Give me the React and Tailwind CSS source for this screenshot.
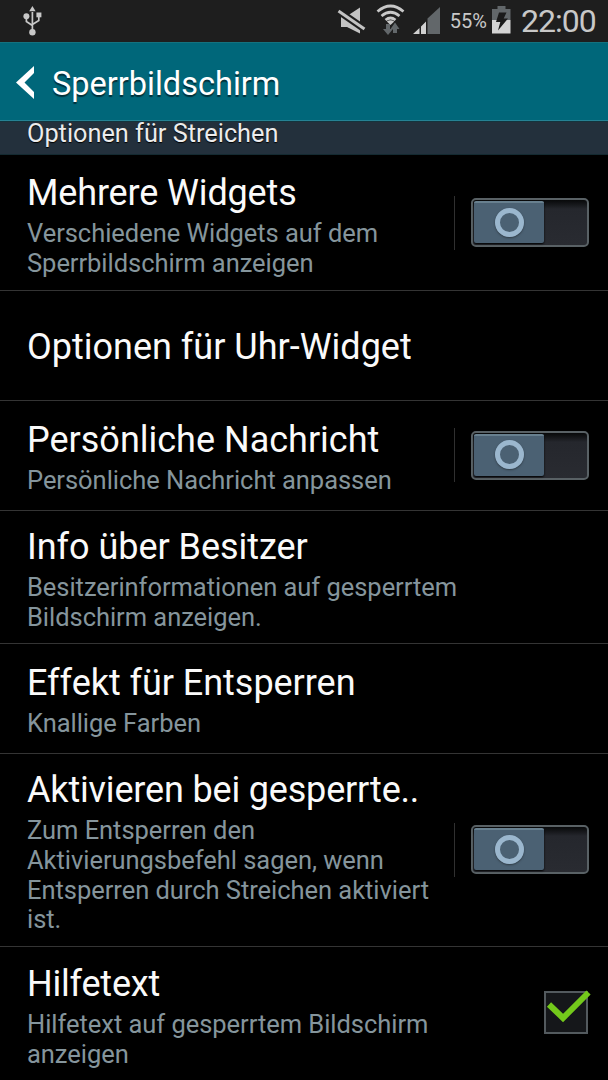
const rows = [
  {
    title: "Mehrere Widgets",
    lines: ["Verschiedene Widgets auf dem", "Sperrbildschirm anzeigen"],
    control: "switch",
    box: "h-[136px] pt-[17px]",
    tracking: "tracking-[-0.15px]",
    offset: "-mt-[17px]",
  },
  {
    title: "Optionen für Uhr-Widget",
    lines: [],
    box: "h-[110px] pt-[35px]",
    tracking: "tracking-normal",
  },
  {
    title: "Persönliche Nachricht",
    lines: ["Persönliche Nachricht anpassen"],
    control: "switch",
    box: "h-[110px] pt-[18px]",
    tracking: "tracking-normal",
    offset: "-mt-[19px]",
  },
  {
    title: "Info über Besitzer",
    lines: ["Besitzerinformationen auf gesperrtem", "Bildschirm anzeigen."],
    box: "h-[133px] pt-[15px]",
    tracking: "tracking-[-0.04px]",
  },
  {
    title: "Effekt für Entsperren",
    lines: ["Knallige Farben"],
    box: "h-[110px] pt-[18px]",
    tracking: "tracking-[-0.04px]",
  },
  {
    title: "Aktivieren bei gesperrte..",
    lines: [
      "Zum Entsperren den",
      "Aktivierungsbefehl sagen, wenn",
      "Entsperren durch Streichen aktiviert",
      "ist.",
    ],
    control: "switch",
    box: "h-[193px] pt-[15px]",
    tracking: "tracking-[-0.17px]",
    offset: "-mt-[16px]",
  },
  {
    title: "Hilfetext",
    lines: ["Hilfetext auf gesperrtem Bildschirm", "anzeigen"],
    control: "checkbox",
    box: "h-[133px] pt-[16px]",
    tracking: "tracking-[-0.2px]",
  },
];

const UsbIcon = () => (
  <svg width="20" height="32" viewBox="0 0 20 32" className="ml-[22px]">
    <g fill="none" stroke="#c8c8c8" strokeWidth="1.7">
      <path d="M10.4 7v20M4.400 12v4.500l6 4M16.800 11v4.500l-6.400 4" />
    </g>
    <g fill="#c8c8c8">
      <path d="M10.400 1l3.200 5.300H7.200z" />
      <circle cx="4.4" cy="11.300" r="3" />
      <path d="M14.400 7.500h5v4.800h-5z" />
      <circle cx="10.4" cy="27.200" r="3.200" />
    </g>
  </svg>
);

const StatusIcons = () => (
  <svg width="106" height="42" viewBox="336 0 106 42">
    <path d="M341 16h6l13-8.500v26l-13-6.500h-6z" fill="#c3c3c3" />
    <path d="M338.500 11l26 18" stroke="#1e1e1e" strokeWidth="7" />
    <path d="M338.500 11l26 18" stroke="#c3c3c3" strokeWidth="3" />
    <g fill="none" stroke="#c8c8c8" strokeWidth="2.700">
      <path d="M377.500 11.500q13-11 26 0M381.500 16q9-7.500 18 0M385.500 20q5-4 10 0" />
    </g>
    <path d="M386.800 21.500q3.700-2.400 7.400 0L390.500 25z" fill="#c8c8c8" />
    <path
      d="M386 24h4v5h3L388 35l-5-6h3zM393 33h4v-4h2.500L395 22.500l-4.500 6.500H393z"
      fill="#62676a"
    />
    <path d="M440 7v27h-12.500V18.500z" fill="#62676a" />
    <path d="M413 34l6.500-6V34zM421 34v-7.500l5-5V34z" fill="#d0d0d0" />
  </svg>
);

const BatteryIcon = () => (
  <svg width="20" height="42" viewBox="491 0 20 42" className="ml-[4px]">
    <path d="M492 9h5.500V6h8v3h5v11h-18.500z" fill="#62676a" />
    <path d="M492 20h18.500v13.500h-18.500z" fill="#d4d4d4" />
    <path d="M499 12.500h7.500l-2.800 6h4.300l-10 12 2.300-8.500H496z" fill="#1b1b1b" />
  </svg>
);

const Switch = () => (
  <div className="flex items-center">
    <div className="h-[54px] w-px bg-[#303030]" />
    <div className="ml-[16px] flex h-[49px] w-[118px] rounded-[5px] border-2 border-[#596165] bg-linear-to-b from-[#08090a] from-0% via-[#25272d] via-20% to-[#292b31] p-px">
      <div className="flex h-[42px] w-[70px] items-center justify-center rounded-[2px] border-t-2 border-[#68808f] bg-[#4b6173] shadow-[0_1px_2px_#000]">
        <div className="-mt-[2px] h-[29px] w-[29px] rounded-full border-[5px] border-[#9bb7ce] shadow-[0_1px_2px_#2f3b45]" />
      </div>
    </div>
  </div>
);

const Checkbox = () => (
  <svg width="50" height="48" viewBox="542 988 50 48">
    <rect x="545" y="993" width="42" height="41" fill="#15171a" stroke="#535a5e" strokeWidth="2" />
    <path
      d="M549 1005.500l14 13.500 25.500-25.500"
      fill="none"
      stroke="#73c91b"
      strokeWidth="6"
    />
  </svg>
);

const Row = ({ title, lines, control, box, tracking, offset }) => (
  <div
    className={`flex shrink-0 justify-between border-b border-[#343434] pl-[27px] last:border-b-0 ${box}`}
  >
    <div className="whitespace-nowrap">
      <h2 className={`text-[36px] leading-[42px] text-[#fafafa] ${tracking}`}>{title}</h2>
      <div className="mt-[5px] text-[25.500px] leading-[29.800px] tracking-[-0.04px] text-[#85959c]">
        {lines.map((line) => (
          <p key={line}>{line}</p>
        ))}
      </div>
    </div>
    {control === "switch" && (
      <div className={`flex items-center pr-[19px] ${offset}`}>
        <Switch />
      </div>
    )}
    {control === "checkbox" && (
      <div className="pt-[24px] pr-[16px]">
        <Checkbox />
      </div>
    )}
  </div>
);

const App = () => (
  <div className="flex h-[1080px] w-[608px] flex-col overflow-hidden bg-black font-[Roboto,sans-serif]">
    <div className="flex h-[42px] shrink-0 items-center bg-[#1e1e1e] text-[#c8c8c8]">
      <UsbIcon />
      <div className="ml-auto flex items-center pr-[12px]">
        <StatusIcons />
        <span className="ml-[8px] text-[20px]">55%</span>
        <BatteryIcon />
        <span className="ml-[10px] w-[75px] text-[32px] tracking-[-1px]">22:00</span>
      </div>
    </div>
    <header className="flex h-[79px] shrink-0 items-center border-t border-b border-t-[#14727f] border-b-[#258294] bg-[#00677a] pl-[16px]">
      <svg width="19" height="34" viewBox="0 0 19 34" className="mt-[2px]">
        <path d="M18 0v7L8.500 16.500 18 26v7L0 16.500z" fill="#fff" />
      </svg>
      <h1 className="ml-[17px] pt-[6px] text-[32.500px] text-white [text-shadow:0_2px_1px_#00303a]">
        Sperrbildschirm
      </h1>
    </header>
    <div className="flex h-[34px] shrink-0 items-start border-t border-b border-t-[#14343d] border-b-[#142a31] bg-[#23303c] pl-[27px] text-[25.300px] leading-[24px] text-[#ececec] [text-shadow:0_1px_1px_#000]">
      Optionen für Streichen
    </div>
    {rows.map((row) => (
      <Row key={row.title} {...row} />
    ))}
  </div>
);

export default App;
